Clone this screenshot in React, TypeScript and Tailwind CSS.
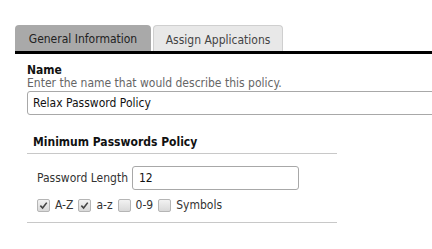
import React from 'react';

const Check = ({ checked, label }: { checked: boolean; label: string }) => (
  <label className="mr-[5px] flex items-center gap-[5px]">
    <span className="flex h-[13px] w-[13px] items-center justify-center rounded-[2px] border border-[#b5b5b5] bg-gradient-to-b from-[#f2f2f2] to-[#d9d9d9]">
      {checked && (
        <svg viewBox="0 0 10 10" className="h-[9px] w-[9px]">
          <path d="M1.5 5.2 L4 7.8 L8.6 1.8" fill="none" stroke="#444" strokeWidth="1.8" />
        </svg>
      )}
    </span>
    <span>{label}</span>
  </label>
);

export default function App() {
  return (
    <div
      className="min-h-[249px] w-[432px] overflow-hidden bg-white text-[12px] text-[#333]"
      style={{ fontFamily: '"DejaVu Sans Condensed", "DejaVu Sans", sans-serif' }}
    >
      <div className="pl-[15px] pt-[25px]">
        <div className="flex gap-[2px]">
          <div className="flex h-[26px] w-[136px] items-center justify-center rounded-t-[4px] bg-[#a9a9a9] pt-[2px] text-[#222]">
            General Information
          </div>
          <div className="flex h-[26px] w-[130px] items-center justify-center rounded-t-[4px] border border-b-0 border-[#cfcfcf] bg-[#e8e8e8] pt-[2px] text-[#444]">
            Assign Applications
          </div>
        </div>
        <div className="h-[3px] bg-black" />
      </div>

      <div className="pl-[27px] pt-[10px]">
        <div className="font-bold leading-[13px] text-[#111]">Name</div>
        <div className="leading-[13px] text-[#666]">Enter the name that would describe this policy.</div>
        <div className="mt-[1px] flex h-[24px] w-[420px] items-center rounded-[3px] border border-[#a8a8a8] pl-[5px] text-[#111]">
          Relax Password Policy
        </div>

        <div className="mt-[20px] w-[310px]">
          <div className="border-b border-[#c8c8c8] pb-[4px] pl-[6px] font-bold leading-[14px] text-[#111]">
            Minimum Passwords Policy
          </div>
          <div className="border-b border-[#c8c8c8] pb-[10px] pl-[10px] pt-[12px]">
            <div className="flex items-center gap-[4px]">
              <span className="text-[#333]">Password Length</span>
              <div className="flex h-[24px] w-[167px] items-center rounded-[3px] border border-[#a8a8a8] pl-[6px] text-[#111]">
                12
              </div>
            </div>
            <div className="mt-[8px] flex items-center leading-[14px]">
              <Check checked label="A-Z" />
              <Check checked label="a-z" />
              <Check checked={false} label="0-9" />
              <Check checked={false} label="Symbols" />
            </div>
          </div>
        </div>
      </div>
    </div>
  );
}
